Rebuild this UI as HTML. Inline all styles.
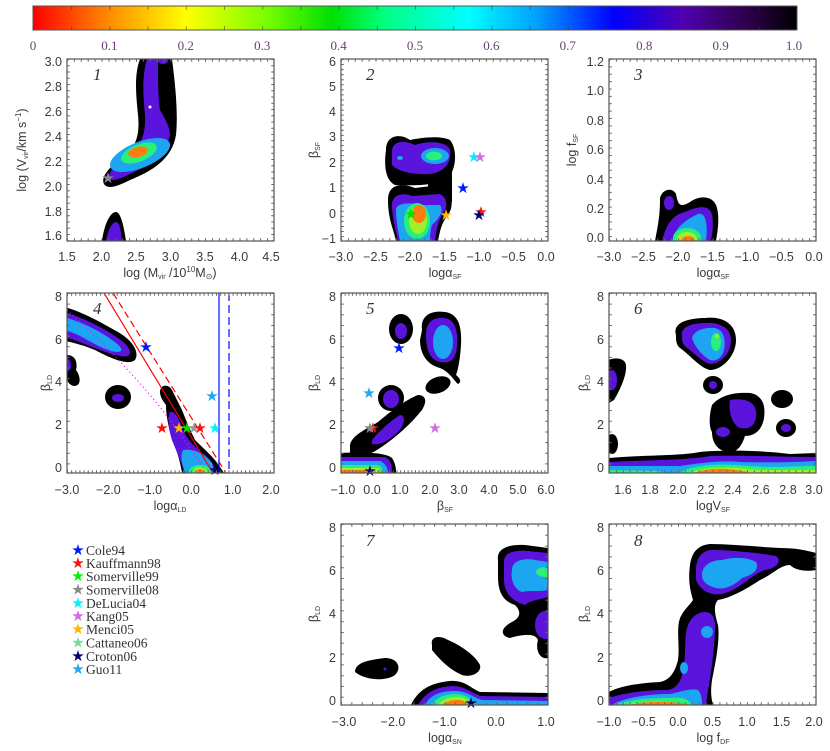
<!DOCTYPE html>
<html><head><meta charset="utf-8"><style>
html,body{margin:0;padding:0;background:#fff;}
svg{display:block;}
text{font-family:"Liberation Sans",sans-serif;}
.tl,.yl,.xl{fill:#3a3a3a;}
.tl{font-size:12.5px;}
.yl{font-size:12.5px;text-anchor:end;}
.xl{font-size:12.5px;text-anchor:middle;}
.num{font-family:"Liberation Serif",serif;font-style:italic;font-size:17px;fill:#333;}
.cb{font-family:"Liberation Serif",serif;font-size:13px;fill:#6a3c7a;text-anchor:middle;}
.lg{font-family:"Liberation Serif",serif;font-size:13.5px;fill:#333;}
.st{font-family:"DejaVu Sans",sans-serif;font-size:15px;text-anchor:middle;dominant-baseline:central;}
.K{fill:#000}.P{fill:#5a14dc}.B{fill:#1ca6f2}.G{fill:#2af07a}.Y{fill:#9ef02a}.O{fill:#ff7a10}
.fr{fill:none;stroke:#555;stroke-width:1.2}
.tk{stroke:#666;stroke-width:2.5;fill:none}
</style></head><body>
<svg width="830" height="751" viewBox="0 0 830 751" xmlns="http://www.w3.org/2000/svg">
<defs>
<linearGradient id="cbg" x1="0" x2="1" y1="0" y2="0">
<stop offset="0" stop-color="#ff0000"/><stop offset="0.1" stop-color="#ff8c00"/><stop offset="0.2" stop-color="#ffff00"/>
<stop offset="0.3" stop-color="#80ff00"/><stop offset="0.39" stop-color="#00e000"/><stop offset="0.46" stop-color="#00ff80"/>
<stop offset="0.57" stop-color="#00ffff"/><stop offset="0.66" stop-color="#00a0ff"/><stop offset="0.76" stop-color="#0000ff"/>
<stop offset="0.85" stop-color="#5000b0"/><stop offset="0.93" stop-color="#300050"/><stop offset="1" stop-color="#000000"/>
</linearGradient>
<clipPath id="c1"><rect x="67" y="59" width="207" height="182"/></clipPath>
<clipPath id="c2"><rect x="341" y="59" width="207" height="182"/></clipPath>
<clipPath id="c3"><rect x="609" y="59" width="207" height="182"/></clipPath>
<clipPath id="c4"><rect x="67" y="293" width="207" height="180"/></clipPath>
<clipPath id="c5"><rect x="341" y="293" width="207" height="180"/></clipPath>
<clipPath id="c6"><rect x="609" y="293" width="207" height="180"/></clipPath>
<clipPath id="c7"><rect x="341" y="524" width="207" height="181"/></clipPath>
<clipPath id="c8"><rect x="609" y="524" width="207" height="181"/></clipPath>
</defs>

<!-- colorbar -->
<rect x="33" y="6" width="764" height="24" fill="url(#cbg)" stroke="#555" stroke-width="1"/>
<line x1="33" y1="8" x2="797" y2="8" stroke="#333" stroke-width="4" stroke-dasharray="1 37.2" opacity="0.5"/>
<line x1="33" y1="28" x2="797" y2="28" stroke="#333" stroke-width="4" stroke-dasharray="1 37.2" opacity="0.5"/>
<g>
<text class="cb" x="33" y="50">0</text><text class="cb" x="109.4" y="50">0.1</text><text class="cb" x="185.8" y="50">0.2</text>
<text class="cb" x="262.2" y="50">0.3</text><text class="cb" x="338.6" y="50">0.4</text><text class="cb" x="415" y="50">0.5</text>
<text class="cb" x="491.4" y="50">0.6</text><text class="cb" x="567.8" y="50">0.7</text><text class="cb" x="644.2" y="50">0.8</text>
<text class="cb" x="720.6" y="50">0.9</text><text class="cb" x="794" y="50">1.0</text>
</g>

<!-- PANEL 1 -->
<g clip-path="url(#c1)">
<path class="K" d="M140,59 L172,59 C176,90 178,115 176,135 C172,160 150,172 130,180 C118,186 108,190 104,184 C100,176 112,165 124,156 C136,147 140,135 138,115 C136,95 134,75 140,59Z"/>
<path class="P" d="M147,59 L158,59 C158,80 158,95 160,110 C166,120 170,128 170,135 C166,155 148,166 130,174 C118,180 110,182 109,178 C108,172 116,164 128,156 C140,148 146,135 145,115 C143,95 142,75 147,59Z"/>
<ellipse class="P" cx="163" cy="61" rx="5" ry="3"/>
<circle cx="150" cy="107" r="1.5" fill="#fff"/>
<ellipse class="B" cx="140" cy="155" rx="32" ry="13" transform="rotate(-22 140 155)"/>
<ellipse class="G" cx="139" cy="153" rx="19" ry="8.5" transform="rotate(-22 139 153)"/>
<ellipse class="O" cx="138" cy="152" rx="10" ry="5" transform="rotate(-15 138 152)"/>
<path class="K" d="M102,241 C104,225 110,212 116,212 C121,212 124,228 126,241Z"/>
<path class="P" d="M106,241 C108,230 112,222 116,222 C120,222 121,232 122,241Z"/>
</g>
<text class="st" x="108" y="178" style="fill:#888">★</text>
<rect class="fr" x="67" y="59" width="207" height="182"/>
<line class="tk" x1="67" y1="239.5" x2="274" y2="239.5" stroke-dasharray="1 5.9"/>
<line class="tk" x1="67" y1="60.5" x2="274" y2="60.5" stroke-dasharray="1 5.9"/>
<line class="tk" x1="68.5" y1="59" x2="68.5" y2="241" stroke-dasharray="1 5.25"/>
<line class="tk" x1="272.5" y1="59" x2="272.5" y2="241" stroke-dasharray="1 5.25"/>
<text class="num" x="93" y="80">1</text>
<text class="yl" x="62" y="66">3.0</text><text class="yl" x="62" y="91">2.8</text><text class="yl" x="62" y="116">2.6</text><text class="yl" x="62" y="141">2.4</text><text class="yl" x="62" y="166">2.2</text><text class="yl" x="62" y="191">2.0</text><text class="yl" x="62" y="216">1.8</text><text class="yl" x="62" y="240">1.6</text>
<text class="xl" x="67" y="261">1.5</text><text class="xl" x="101.5" y="261">2.0</text><text class="xl" x="136" y="261">2.5</text><text class="xl" x="170.5" y="261">3.0</text><text class="xl" x="205" y="261">3.5</text><text class="xl" x="239.5" y="261">4.0</text><text class="xl" x="271" y="261">4.5</text>
<text class="xl" x="170" y="277">log (M<tspan font-size="7" dy="2">vir</tspan><tspan dy="-2"> /10</tspan><tspan font-size="8" dy="-5">10</tspan><tspan dy="5">M</tspan><tspan font-size="8" dy="2">⊙</tspan><tspan dy="-2">)</tspan></text>
<text class="xl" transform="translate(26 150) rotate(-90)">log (V<tspan font-size="7" dy="2">vir</tspan><tspan dy="-2">/km s</tspan><tspan font-size="8" dy="-5">−1</tspan><tspan dy="5">)</tspan></text>

<!-- PANEL 2 -->
<g clip-path="url(#c2)">
<path class="K" d="M386,150 C386,135 400,133 410,140 C420,138 440,135 450,140 C458,150 456,170 448,178 C440,185 415,186 395,185 C385,180 384,165 386,150Z"/>
<rect class="K" x="428" y="172" width="24" height="30"/>
<path class="K" d="M388,200 C388,185 400,182 415,188 L440,185 C452,190 455,205 448,215 C442,222 440,230 438,241 L396,241 C394,230 388,220 388,200Z"/>
<path class="P" d="M392,152 C392,140 405,140 415,145 C430,140 448,142 450,150 C452,162 445,172 430,174 C415,175 398,172 392,165Z"/>
<ellipse class="B" cx="435" cy="156" rx="14" ry="8"/>
<ellipse class="G" cx="434" cy="156" rx="8" ry="4.5"/>
<ellipse class="B" cx="400" cy="158" rx="3" ry="2"/>
<path class="P" d="M392,205 C392,195 402,192 412,196 L440,194 C448,198 448,208 442,215 C438,222 436,232 435,241 L398,241 C396,230 392,218 392,205Z"/>
<path class="B" d="M396,210 C396,203 410,202 420,205 L440,205 C444,210 440,218 432,225 C430,232 430,238 430,241 L400,241 C398,230 396,220 396,210Z"/>
<ellipse class="G" cx="417" cy="221" rx="13" ry="18"/>
<ellipse class="Y" cx="418" cy="220" rx="9" ry="14"/>
<ellipse class="O" cx="419" cy="214" rx="7" ry="9"/>
</g>
<text class="st" x="411" y="214" style="fill:#00e000">★</text>
<text class="st" x="446" y="215" style="fill:#ffb400">★</text>
<text class="st" x="463" y="188" style="fill:#0018ff">★</text>
<text class="st" x="474" y="157" style="fill:#00f0ff">★</text>
<text class="st" x="480" y="157" style="fill:#d070e0">★</text>
<text class="st" x="481" y="212" style="fill:#ff1010">★</text>
<text class="st" x="479" y="215" style="fill:#000070">★</text>
<rect class="fr" x="341" y="59" width="207" height="182"/>
<line class="tk" x1="341" y1="239.5" x2="548" y2="239.5" stroke-dasharray="1 5.9"/>
<line class="tk" x1="341" y1="60.5" x2="548" y2="60.5" stroke-dasharray="1 5.9"/>
<line class="tk" x1="342.5" y1="59" x2="342.5" y2="241" stroke-dasharray="1 4.06"/>
<line class="tk" x1="546.5" y1="59" x2="546.5" y2="241" stroke-dasharray="1 4.06"/>
<text class="num" x="366" y="80">2</text>
<text class="yl" x="336" y="66">6</text><text class="yl" x="336" y="91">5</text><text class="yl" x="336" y="116">4</text><text class="yl" x="336" y="141">3</text><text class="yl" x="336" y="167">2</text><text class="yl" x="336" y="192">1</text><text class="yl" x="336" y="218">0</text><text class="yl" x="336" y="243">−1</text>
<text class="xl" x="341" y="261">−3.0</text><text class="xl" x="375.5" y="261">−2.5</text><text class="xl" x="410" y="261">−2.0</text><text class="xl" x="444.5" y="261">−1.5</text><text class="xl" x="479" y="261">−1.0</text><text class="xl" x="513.5" y="261">−0.5</text><text class="xl" x="546" y="261">0.0</text>
<text class="xl" x="445" y="277">logα<tspan font-size="7" dy="2">SF</tspan></text>
<text class="xl" transform="translate(318 150) rotate(-90)">β<tspan font-size="7" dy="2">SF</tspan></text>

<!-- PANEL 3 -->
<g clip-path="url(#c3)">
<path class="K" d="M655,241 C658,225 660,215 660,200 C660,190 672,186 676,194 C678,205 680,208 690,202 C700,195 712,196 716,205 C720,215 718,230 716,241Z"/>
<path class="P" d="M662,241 C666,225 672,215 685,212 C700,205 710,205 712,215 C714,225 712,235 711,241Z"/>
<ellipse class="P" cx="669" cy="203" rx="5" ry="7"/>
<path class="B" d="M672,241 C675,228 685,220 698,214 C706,212 708,225 706,241Z"/>
<ellipse class="G" cx="687" cy="238" rx="14" ry="10"/>
<ellipse class="Y" cx="687" cy="239" rx="10" ry="7"/>
<ellipse class="O" cx="688" cy="241" rx="7" ry="5"/>
</g>
<rect class="fr" x="609" y="59" width="207" height="182"/>
<line class="tk" x1="609" y1="239.5" x2="816" y2="239.5" stroke-dasharray="1 5.9"/>
<line class="tk" x1="609" y1="60.5" x2="816" y2="60.5" stroke-dasharray="1 5.9"/>
<line class="tk" x1="610.5" y1="59" x2="610.5" y2="241" stroke-dasharray="1 6.38"/>
<line class="tk" x1="814.5" y1="59" x2="814.5" y2="241" stroke-dasharray="1 6.38"/>
<text class="num" x="634" y="80">3</text>
<text class="yl" x="604" y="66">1.2</text><text class="yl" x="604" y="95">1.0</text><text class="yl" x="604" y="125">0.8</text><text class="yl" x="604" y="154">0.6</text><text class="yl" x="604" y="184">0.4</text><text class="yl" x="604" y="213">0.2</text><text class="yl" x="604" y="242">0.0</text>
<text class="xl" x="609" y="261">−3.0</text><text class="xl" x="643.5" y="261">−2.5</text><text class="xl" x="678" y="261">−2.0</text><text class="xl" x="712.5" y="261">−1.5</text><text class="xl" x="747" y="261">−1.0</text><text class="xl" x="781.5" y="261">−0.5</text><text class="xl" x="814" y="261">0.0</text>
<text class="xl" x="713" y="277">logα<tspan font-size="7" dy="2">SF</tspan></text>
<text class="xl" transform="translate(576 150) rotate(-90)">log f<tspan font-size="7" dy="2">SF</tspan></text>

<!-- PANEL 4 -->
<g clip-path="url(#c4)">
<path class="K" d="M60,306 C80,310 100,322 118,332 C132,340 140,352 135,360 C128,366 110,358 95,350 C80,344 70,342 60,340Z"/>
<path class="P" d="M60,311 C80,316 100,326 115,336 C128,344 133,352 128,356 C120,358 105,352 90,346 C78,341 68,338 60,335Z"/>
<path class="B" d="M60,316 C80,321 98,330 112,340 C122,347 124,351 118,352 C108,352 95,344 80,336 C70,331 64,330 60,330Z"/>
<path class="K" d="M67,355 C75,355 78,362 76,370 C80,375 82,385 75,386 C70,386 68,382 67,380Z"/>
<ellipse class="P" cx="68" cy="365" rx="3" ry="6"/>
<ellipse class="K" cx="118" cy="397" rx="13" ry="12"/>
<ellipse class="P" cx="118" cy="398" rx="6" ry="4"/>
<path class="K" d="M160,392 C160,385 168,383 172,390 C176,398 178,402 182,410 C186,420 190,430 195,440 C205,450 215,458 222,470 L224,473 L182,473 C180,460 176,448 172,440 C168,425 166,415 166,405 C162,400 160,396 160,392Z"/>
<path class="P" d="M170,412 C175,410 180,420 183,430 C188,440 195,448 205,455 C212,460 215,468 216,473 L185,473 C181,462 176,450 172,440 C169,430 167,420 170,412Z"/>
<path class="B" d="M183,450 C195,448 205,455 212,463 L214,473 L185,473 C182,465 180,455 183,450Z"/>
<ellipse class="G" cx="200" cy="472" rx="11" ry="7"/>
<ellipse class="Y" cx="200" cy="472" rx="7" ry="5"/>
<ellipse class="O" cx="200" cy="473" rx="4" ry="4"/>
<path d="M104,293 L213,473" stroke="#ff0000" stroke-width="1.2" fill="none"/>
<path d="M113,293 L226,473" stroke="#ff0000" stroke-width="1.2" fill="none" stroke-dasharray="7 4"/>
<line x1="219" y1="293" x2="219" y2="473" stroke="#0010ff" stroke-width="1.2"/>
<line x1="229" y1="293" x2="229" y2="473" stroke="#0010ff" stroke-width="1.2" stroke-dasharray="8 4"/>
<path d="M67,310 C100,340 140,380 170,420 C185,440 195,455 205,470" stroke="#ff00ff" stroke-width="1.3" fill="none" stroke-dasharray="1 3"/>
</g>
<text class="st" x="146" y="347" style="fill:#0018ff">★</text>
<text class="st" x="162" y="428" style="fill:#ff1010">★</text>
<text class="st" x="179" y="428" style="fill:#ffb400">★</text>
<text class="st" x="187" y="428" style="fill:#00e000">★</text>
<text class="st" x="194" y="428" style="fill:#999">★</text>
<text class="st" x="200" y="428" style="fill:#ff1010">★</text>
<text class="st" x="215" y="428" style="fill:#00f0ff">★</text>
<text class="st" x="212" y="396" style="fill:#20a8f0">★</text>
<text class="st" x="215" y="470" style="fill:#000070">★</text>
<rect class="fr" x="67" y="293" width="207" height="180"/>
<line class="tk" x1="67" y1="471.5" x2="274" y2="471.5" stroke-dasharray="1 3.14"/>
<line class="tk" x1="67" y1="294.5" x2="274" y2="294.5" stroke-dasharray="1 3.14"/>
<line class="tk" x1="68.5" y1="293" x2="68.5" y2="473" stroke-dasharray="1 9.65"/>
<line class="tk" x1="272.5" y1="293" x2="272.5" y2="473" stroke-dasharray="1 9.65"/>
<text class="num" x="93" y="314">4</text>
<text class="yl" x="62" y="301">8</text><text class="yl" x="62" y="344">6</text><text class="yl" x="62" y="386">4</text><text class="yl" x="62" y="429">2</text><text class="yl" x="62" y="472">0</text>
<text class="xl" x="67" y="494">−3.0</text><text class="xl" x="108.4" y="494">−2.0</text><text class="xl" x="149.8" y="494">−1.0</text><text class="xl" x="191.2" y="494">0.0</text><text class="xl" x="232.6" y="494">1.0</text><text class="xl" x="271" y="494">2.0</text>
<text class="xl" x="170" y="510">logα<tspan font-size="7" dy="2">LD</tspan></text>
<text class="xl" transform="translate(50 383) rotate(-90)">β<tspan font-size="7" dy="2">LD</tspan></text>

<!-- PANEL 5 -->
<g clip-path="url(#c5)">
<ellipse class="K" cx="401" cy="329" rx="12" ry="15"/>
<ellipse class="P" cx="401" cy="331" rx="6" ry="8"/>
<path class="K" d="M422,330 C420,315 432,310 445,312 C458,314 462,325 461,345 C460,360 458,370 456,375 C460,378 462,382 458,384 C455,382 450,372 440,368 C428,365 420,355 420,340Z"/>
<path class="P" d="M426,335 C426,320 435,317 445,318 C455,320 458,330 457,345 C456,358 452,364 440,362 C430,360 426,350 426,335Z"/>
<ellipse class="B" cx="443" cy="342" rx="10" ry="17"/>
<ellipse class="K" cx="438" cy="385" rx="13" ry="8" transform="rotate(-20 438 385)"/>
<ellipse class="K" cx="391" cy="398" rx="13" ry="13"/>
<ellipse class="P" cx="391" cy="399" rx="8" ry="9"/>
<path class="K" d="M350,445 C352,435 365,430 378,422 C390,412 405,400 418,395 C425,395 428,400 422,410 C410,425 395,438 380,448 C370,455 360,458 350,455Z"/>
<path class="P" d="M372,440 C380,430 392,420 400,415 C406,415 405,425 398,432 C390,440 380,446 372,444Z"/>
<path class="K" d="M341,453 C360,452 385,452 392,458 C396,464 396,470 396,473 L341,473Z"/>
<path class="P" d="M341,457 L385,457 C392,460 392,468 392,473 L341,473Z"/>
<path class="B" d="M341,461 L380,461 C387,464 388,470 388,473 L341,473Z"/>
<path class="G" d="M341,465 L378,465 C383,467 383,470 383,473 L341,473Z"/>
<rect class="Y" x="341" y="468" width="38" height="5"/>
<rect class="O" x="341" y="470" width="30" height="3"/>
</g>
<text class="st" x="399" y="348" style="fill:#0018ff">★</text>
<text class="st" x="369" y="393" style="fill:#20a8f0">★</text>
<text class="st" x="373" y="428" style="fill:#ff1010">★</text>
<text class="st" x="370" y="428" style="fill:#888">★</text>
<text class="st" x="435" y="428" style="fill:#d070e0">★</text>
<text class="st" x="370" y="471" style="fill:#000070">★</text>
<rect class="fr" x="341" y="293" width="207" height="180"/>
<line class="tk" x1="341" y1="471.5" x2="548" y2="471.5" stroke-dasharray="1 2.7"/>
<line class="tk" x1="341" y1="294.5" x2="548" y2="294.5" stroke-dasharray="1 2.7"/>
<line class="tk" x1="342.5" y1="293" x2="342.5" y2="473" stroke-dasharray="1 9.65"/>
<line class="tk" x1="546.5" y1="293" x2="546.5" y2="473" stroke-dasharray="1 9.65"/>
<text class="num" x="366" y="314">5</text>
<text class="yl" x="336" y="301">8</text><text class="yl" x="336" y="344">6</text><text class="yl" x="336" y="386">4</text><text class="yl" x="336" y="429">2</text><text class="yl" x="336" y="472">0</text>
<text class="xl" x="343" y="494">−1.0</text><text class="xl" x="372" y="494">0.0</text><text class="xl" x="400" y="494">1.0</text><text class="xl" x="430" y="494">2.0</text><text class="xl" x="459" y="494">3.0</text><text class="xl" x="489" y="494">4.0</text><text class="xl" x="518" y="494">5.0</text><text class="xl" x="546" y="494">6.0</text>
<text class="xl" x="445" y="510">β<tspan font-size="7" dy="2">SF</tspan></text>
<text class="xl" transform="translate(318 383) rotate(-90)">β<tspan font-size="7" dy="2">LD</tspan></text>

<!-- PANEL 6 -->
<g clip-path="url(#c6)">
<path class="K" d="M676,335 C672,322 690,318 705,318 C720,316 736,322 736,340 C736,356 722,370 710,370 C700,368 690,355 680,348 C676,345 676,340 676,335Z"/>
<path class="P" d="M682,336 C680,326 694,323 706,323 C718,322 731,327 731,340 C731,354 720,364 710,364 C702,362 693,352 686,347 C682,344 682,340 682,336Z"/>
<path class="B" d="M692,338 C694,330 705,327 715,328 C724,330 726,340 724,350 C722,358 716,362 710,360 C703,356 695,348 692,338Z"/>
<ellipse class="G" cx="716" cy="342" rx="5" ry="9"/>
<circle class="Y" cx="717" cy="336" r="2"/>
<path class="K" d="M609,360 C615,357 625,358 626,365 C627,375 620,390 614,400 L609,403Z"/>
<ellipse class="P" cx="612" cy="380" rx="5" ry="10"/>
<ellipse class="K" cx="612" cy="444" rx="6" ry="10"/>
<ellipse class="K" cx="713" cy="385" rx="10" ry="9"/>
<ellipse class="P" cx="713" cy="385" rx="4" ry="4"/>
<path class="K" d="M712,405 C720,395 735,392 750,393 C762,395 766,405 764,418 C762,430 755,436 745,436 C742,445 738,452 730,452 C720,452 712,445 712,432 C708,425 710,412 712,405Z"/>
<path class="P" d="M730,400 C742,398 755,400 756,412 C757,425 750,430 740,428 C732,425 728,410 730,400Z"/>
<ellipse class="K" cx="723" cy="432" rx="11" ry="10"/>
<ellipse class="P" cx="723" cy="432" rx="7" ry="5"/>
<ellipse class="K" cx="782" cy="399" rx="11" ry="9"/>
<ellipse class="K" cx="786" cy="428" rx="10" ry="9"/>
<ellipse class="P" cx="786" cy="428" rx="5" ry="4"/>
<path class="K" d="M609,458 C640,455 680,456 700,452 C720,450 760,450 790,454 L816,453 L816,473 L609,473Z"/>
<path class="P" d="M609,462 C650,460 690,460 710,456 C740,455 780,457 816,457 L816,473 L609,473Z"/>
<path class="B" d="M609,466 L680,466 C700,463 720,460 740,462 C770,463 800,462 816,461 L816,473 L609,473Z"/>
<path class="G" d="M680,473 C690,465 720,463 750,466 C770,468 800,466 816,466 L816,473Z"/>
<path class="G" d="M609,470 L660,471 L660,473 L609,473Z"/>
<path class="Y" d="M690,473 C700,467 730,466 760,470 L816,470 L816,473Z"/>
<path class="O" d="M695,473 C705,468 728,467 752,473Z"/>
</g>
<rect class="fr" x="609" y="293" width="207" height="180"/>
<line class="tk" x1="609" y1="471.5" x2="816" y2="471.5" stroke-dasharray="1 5.9"/>
<line class="tk" x1="609" y1="294.5" x2="816" y2="294.5" stroke-dasharray="1 5.9"/>
<line class="tk" x1="610.5" y1="293" x2="610.5" y2="473" stroke-dasharray="1 9.65"/>
<line class="tk" x1="814.5" y1="293" x2="814.5" y2="473" stroke-dasharray="1 9.65"/>
<text class="num" x="634" y="314">6</text>
<text class="yl" x="604" y="301">8</text><text class="yl" x="604" y="344">6</text><text class="yl" x="604" y="386">4</text><text class="yl" x="604" y="429">2</text><text class="yl" x="604" y="472">0</text>
<text class="xl" x="623" y="494">1.6</text><text class="xl" x="650" y="494">1.8</text><text class="xl" x="678" y="494">2.0</text><text class="xl" x="706" y="494">2.2</text><text class="xl" x="733" y="494">2.4</text><text class="xl" x="761" y="494">2.6</text><text class="xl" x="788" y="494">2.8</text><text class="xl" x="814" y="494">3.0</text>
<text class="xl" x="713" y="510">logV<tspan font-size="7" dy="2">SF</tspan></text>
<text class="xl" transform="translate(588 383) rotate(-90)">β<tspan font-size="7" dy="2">LD</tspan></text>

<!-- PANEL 7 -->
<g clip-path="url(#c7)">
<path class="K" d="M498,560 C496,548 510,544 525,545 L548,548 L548,658 C540,660 535,650 538,640 C535,632 520,635 510,638 C500,636 500,628 512,622 C520,618 522,612 515,605 C500,600 498,588 498,575Z"/>
<path class="P" d="M504,563 C503,552 515,550 528,551 L548,553 L548,597 C540,600 530,600 525,605 C515,602 504,595 504,580Z"/>
<ellipse class="P" cx="545" cy="625" rx="10" ry="14"/>
<path class="B" d="M512,570 C512,560 525,558 535,560 L548,562 L548,590 C540,592 530,590 522,592 C515,590 510,580 512,570Z"/>
<ellipse class="G" cx="545" cy="572" rx="9" ry="5"/>
<path class="K" d="M355,672 C355,662 370,660 385,658 C398,658 402,668 395,675 C385,682 365,680 355,672Z"/>
<circle class="P" cx="385" cy="669" r="1.5"/>
<path class="K" d="M432,645 C430,636 440,635 448,640 C460,645 475,655 480,665 C482,672 472,678 462,675 C450,670 440,660 432,650Z"/>
<path class="K" d="M411,705 C418,690 430,683 450,681 C465,680 470,688 480,692 L548,693 L548,705Z"/>
<path class="P" d="M418,705 C425,693 435,687 452,686 C465,686 470,692 480,696 L548,697 L548,705Z"/>
<path class="B" d="M425,705 C430,695 440,691 455,691 C468,691 472,697 482,700 L548,701 L548,705Z"/>
<path class="G" d="M432,705 C437,697 445,694 456,694 C466,694 472,700 478,705Z"/>
<path class="Y" d="M438,705 C443,699 450,697 458,697 C466,697 470,702 472,705Z"/>
<path class="O" d="M442,705 C446,701 452,700 458,700 C464,700 467,703 468,705Z"/>
</g>
<text class="st" x="471" y="703" style="fill:#000070">★</text>
<rect class="fr" x="341" y="524" width="207" height="181"/>
<line class="tk" x1="341" y1="703.5" x2="548" y2="703.5" stroke-dasharray="1 9.35"/>
<line class="tk" x1="341" y1="525.5" x2="548" y2="525.5" stroke-dasharray="1 9.35"/>
<line class="tk" x1="342.5" y1="524" x2="342.5" y2="705" stroke-dasharray="1 9.8"/>
<line class="tk" x1="546.5" y1="524" x2="546.5" y2="705" stroke-dasharray="1 9.8"/>
<text class="num" x="366" y="546">7</text>
<text class="yl" x="336" y="532">8</text><text class="yl" x="336" y="575">6</text><text class="yl" x="336" y="618">4</text><text class="yl" x="336" y="662">2</text><text class="yl" x="336" y="705">0</text>
<text class="xl" x="344" y="726">−3.0</text><text class="xl" x="393" y="726">−2.0</text><text class="xl" x="444.5" y="726">−1.0</text><text class="xl" x="496" y="726">0.0</text><text class="xl" x="546" y="726">1.0</text>
<text class="xl" x="445" y="742">logα<tspan font-size="7" dy="2">SN</tspan></text>
<text class="xl" transform="translate(318 614) rotate(-90)">β<tspan font-size="7" dy="2">LD</tspan></text>

<!-- PANEL 8 -->
<g clip-path="url(#c8)">
<path class="K" d="M609,692 C620,686 640,683 660,682 C670,680 675,672 678,660 C680,645 676,630 680,618 C685,608 690,605 693,600 C690,590 688,580 690,565 C692,550 700,545 710,544 C730,544 760,547 780,548 C795,548 805,550 816,553 L816,570 C805,572 795,570 790,565 C780,565 772,575 760,580 C745,590 730,598 718,600 C713,605 715,615 718,625 C720,640 716,660 712,680 C710,695 712,700 713,705 L609,705Z"/>
<path class="P" d="M609,698 C625,692 650,690 668,690 C678,688 682,680 684,665 C686,650 684,635 688,625 C692,615 700,612 705,612 C712,612 716,618 715,630 C714,650 712,670 708,690 L706,705 L609,705Z"/>
<path class="P" d="M696,570 C696,555 705,550 712,550 C730,550 760,553 776,556 C782,560 778,568 765,570 C750,575 740,590 722,594 C710,596 700,590 696,580Z"/>
<path class="B" d="M702,575 C702,565 712,560 722,560 C735,556 750,558 756,562 C760,570 752,575 742,578 C735,585 725,590 716,588 C708,586 702,582 702,575Z"/>
<circle class="B" cx="707" cy="632" r="6"/>
<ellipse class="B" cx="684" cy="668" rx="4" ry="6"/>
<path class="B" d="M612,705 C625,697 650,694 670,694 C680,692 690,688 698,690 C702,695 702,700 702,705Z"/>
<path class="G" d="M615,705 C630,699 650,698 670,698 C680,697 688,698 692,705Z"/>
<path class="Y" d="M625,705 C640,701 670,700 686,705Z"/>
<ellipse class="O" cx="660" cy="705" rx="28" ry="3"/>
</g>
<rect class="fr" x="609" y="524" width="207" height="181"/>
<line class="tk" x1="609" y1="703.5" x2="816" y2="703.5" stroke-dasharray="1 5.9"/>
<line class="tk" x1="609" y1="525.5" x2="816" y2="525.5" stroke-dasharray="1 5.9"/>
<line class="tk" x1="610.5" y1="524" x2="610.5" y2="705" stroke-dasharray="1 9.8"/>
<line class="tk" x1="814.5" y1="524" x2="814.5" y2="705" stroke-dasharray="1 9.8"/>
<text class="num" x="634" y="546">8</text>
<text class="yl" x="604" y="532">8</text><text class="yl" x="604" y="575">6</text><text class="yl" x="604" y="618">4</text><text class="yl" x="604" y="662">2</text><text class="yl" x="604" y="705">0</text>
<text class="xl" x="609" y="726">−1.0</text><text class="xl" x="643.5" y="726">−0.5</text><text class="xl" x="678" y="726">0.0</text><text class="xl" x="712.5" y="726">0.5</text><text class="xl" x="747" y="726">1.0</text><text class="xl" x="781.5" y="726">1.5</text><text class="xl" x="814" y="726">2.0</text>
<text class="xl" x="713" y="742">log f<tspan font-size="7" dy="2">DF</tspan></text>
<text class="xl" transform="translate(588 614) rotate(-90)">β<tspan font-size="7" dy="2">LD</tspan></text>

<!-- legend -->
<g>
<text class="st" x="78" y="550" style="fill:#0018ff">★</text><text class="lg" x="86" y="555">Cole94</text>
<text class="st" x="78" y="563" style="fill:#ff1010">★</text><text class="lg" x="86" y="568">Kauffmann98</text>
<text class="st" x="78" y="576" style="fill:#00f000">★</text><text class="lg" x="86" y="581">Somerville99</text>
<text class="st" x="78" y="589.5" style="fill:#888">★</text><text class="lg" x="86" y="594.5">Somerville08</text>
<text class="st" x="78" y="603" style="fill:#00f0ff">★</text><text class="lg" x="86" y="608">DeLucia04</text>
<text class="st" x="78" y="616" style="fill:#d070e0">★</text><text class="lg" x="86" y="621">Kang05</text>
<text class="st" x="78" y="629" style="fill:#ffb400">★</text><text class="lg" x="86" y="634">Menci05</text>
<text class="st" x="78" y="642.5" style="fill:#70e0a0">★</text><text class="lg" x="86" y="647.5">Cattaneo06</text>
<text class="st" x="78" y="656" style="fill:#000070">★</text><text class="lg" x="86" y="661">Croton06</text>
<text class="st" x="78" y="669" style="fill:#20a8f0">★</text><text class="lg" x="86" y="674">Guo11</text>
</g>
</svg>
</body></html>
